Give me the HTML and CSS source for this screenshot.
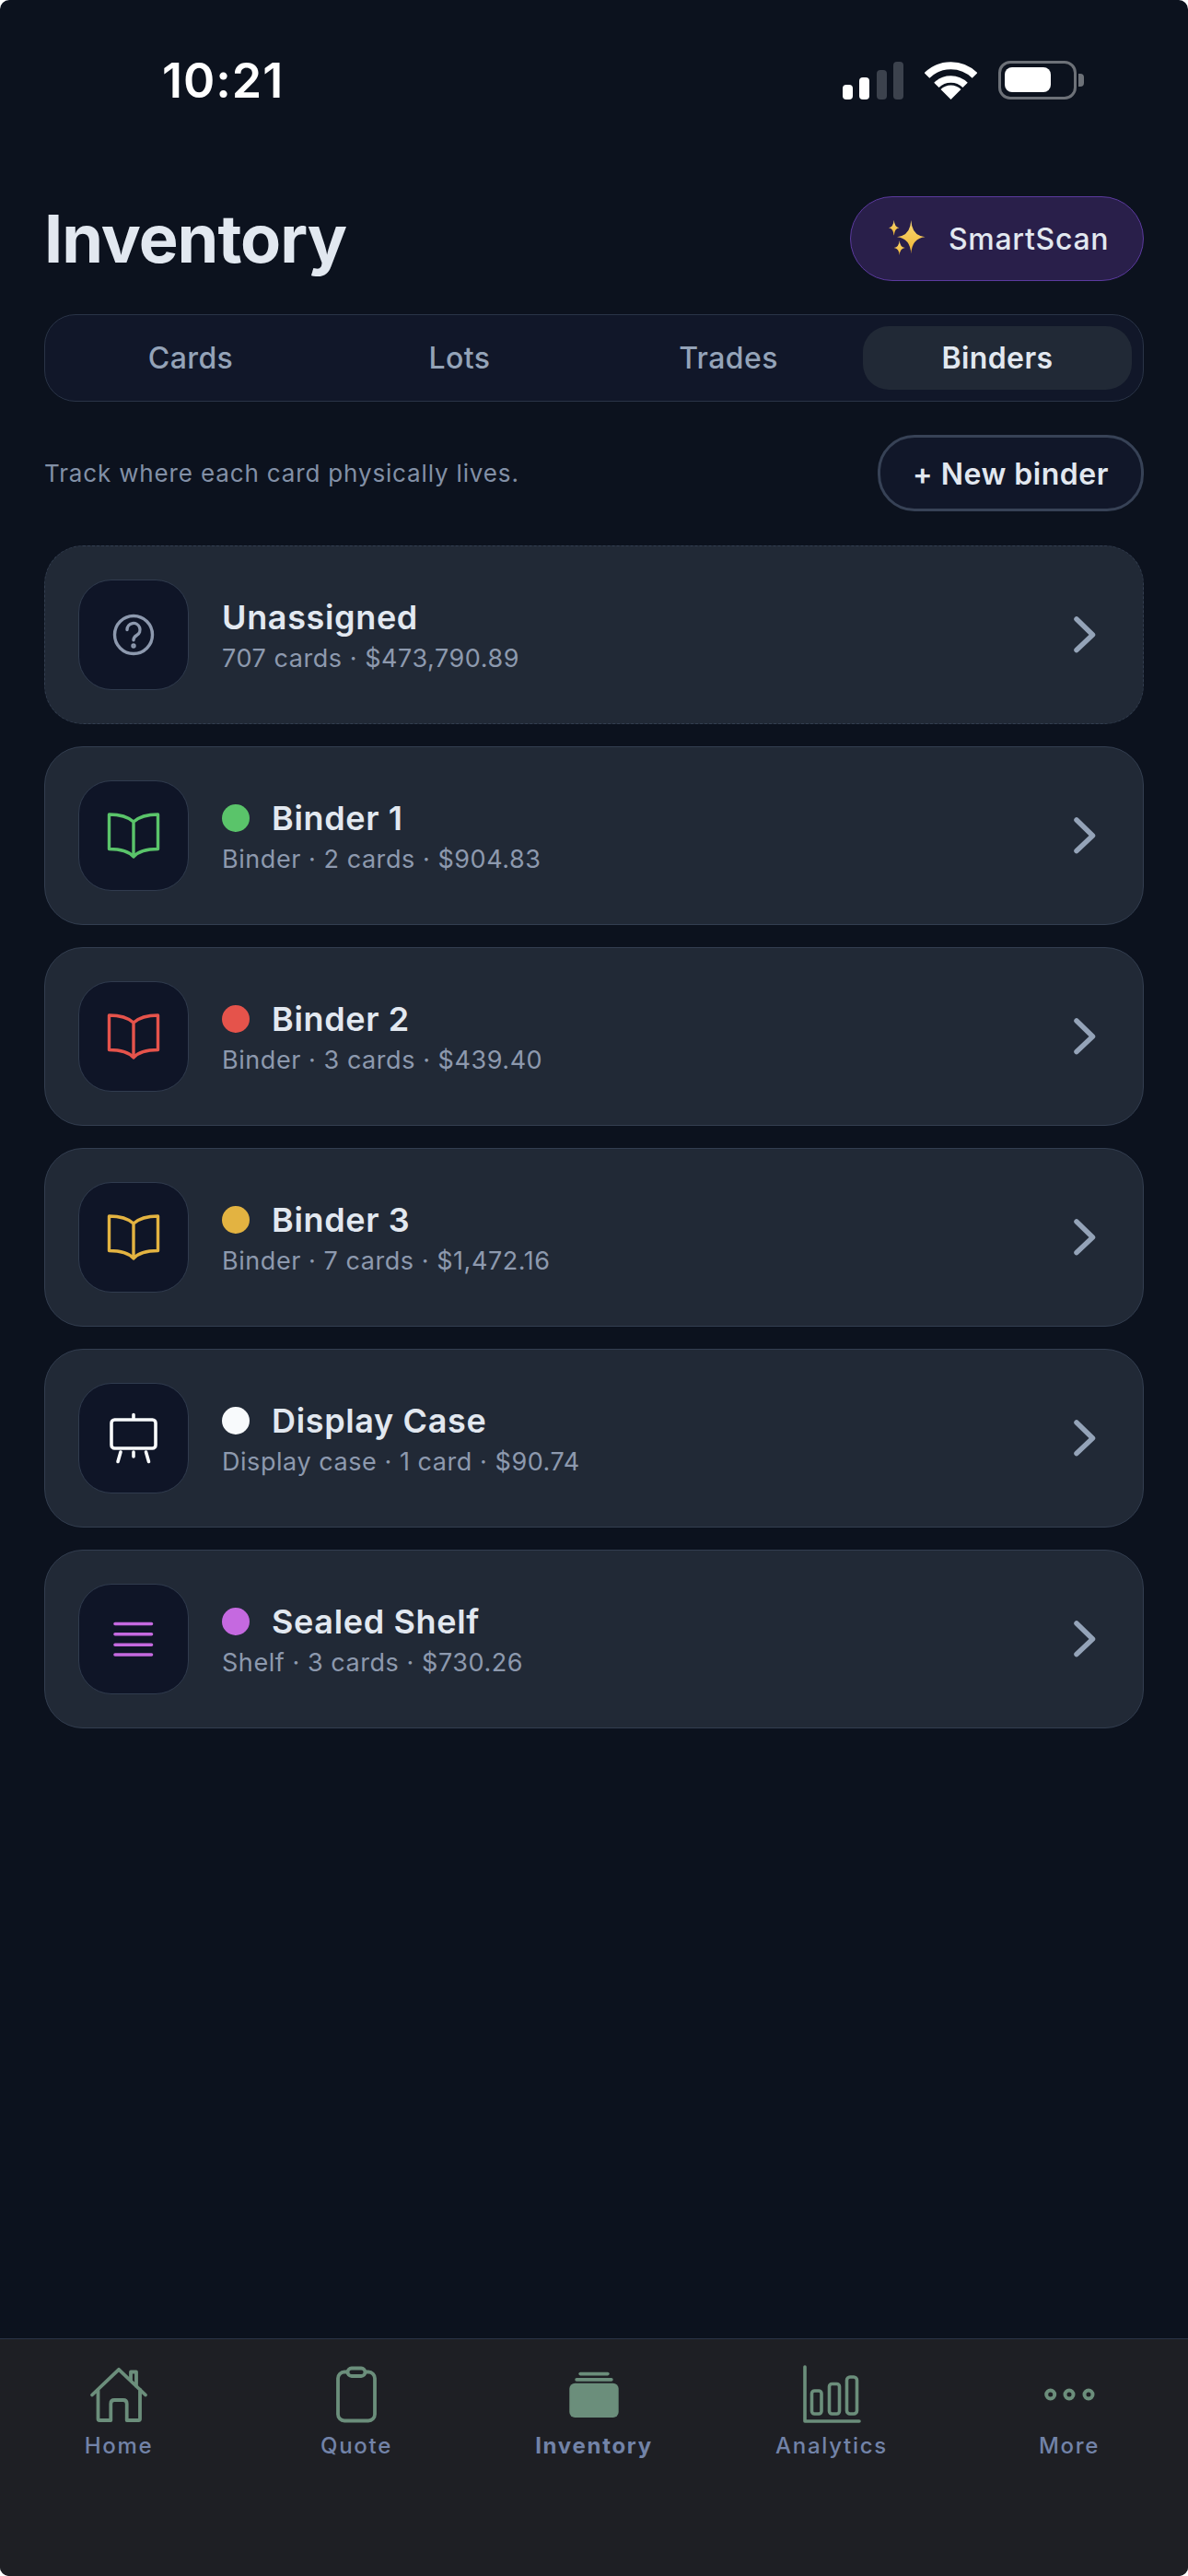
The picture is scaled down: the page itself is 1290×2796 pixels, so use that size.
FILE: index.html
```html
<!DOCTYPE html>
<html lang="en">
<head>
<meta charset="utf-8">
<title>Inventory</title>
<link rel="stylesheet" href="styles.css">
</head>
<body>
<div class="app">
  <div class="status">
    <div class="time">10:21</div>
    <div class="status-icons">
      <div class="signal"><i class="b1"></i><i class="b2"></i><i class="b3 dim"></i><i class="b4 dim"></i></div>
      <svg class="wifi" viewBox="0 0 57 41" width="57" height="41"><path d="M2.5 15A36.8 36.8 0 0 1 54.5 15" fill="none" stroke="#fff" stroke-width="8"/><path d="M12.9 25.4A22 22 0 0 1 44.1 25.4" fill="none" stroke="#fff" stroke-width="7.5"/><path d="M28.5 41L17.5 30A15.5 15.5 0 0 1 39.5 30Z" fill="#fff"/></svg>
      <div class="battery"><div class="battery-shell"><div class="battery-fill"></div></div><div class="battery-nub"></div></div>
    </div>
  </div>
  <main class="main">
    <header class="head">
      <h1 class="title">Inventory</h1>
      <button class="smart">
        <svg viewBox="0 0 40 40" width="40" height="40"><defs><linearGradient id="gold" x1="0" y1="0" x2="0" y2="1"><stop offset="0" stop-color="#f7d774"/><stop offset="1" stop-color="#f2b632"/></linearGradient></defs><path d="M24.3 0Q25.2 16.8 39.5 18.3Q25.2 19.8 24.3 36.5Q23.4 19.8 9 18.3Q23.4 16.8 24.3 0Z" fill="url(#gold)"/><path d="M5.7 -0.4Q6.2 7.6 11.4 8.3Q6.2 9 5.7 17Q5.2 9 0 8.3Q5.2 7.6 5.7 -0.4Z" fill="url(#gold)"/><path d="M11.7 22Q12.2 29.3 17.7 30Q12.2 30.7 11.7 38Q11.2 30.7 5.7 30Q11.2 29.3 11.7 22Z" fill="url(#gold)"/></svg>
        <span>SmartScan</span>
      </button>
    </header>
    <nav class="tabs">
      <div class="tab">Cards</div>
      <div class="tab">Lots</div>
      <div class="tab">Trades</div>
      <div class="tab active">Binders</div>
    </nav>
    <div class="bar">
      <p class="hint">Track where each card physically lives.</p>
      <button class="new">+ New binder</button>
    </div>
    <section class="list">
      <article class="card dashed">
        <div class="box c-slate"><svg viewBox="0 0 60 60" width="60" height="60" fill="none" stroke="currentColor" stroke-width="3.4" stroke-linecap="round"><circle cx="30" cy="30" r="20.5"/><path d="M23 24.5a7 7 0 1 1 10.5 6c-2.300 1.300-3.500 2.800-3.500 5.200"/><circle cx="30" cy="42" r="1" fill="currentColor"/></svg></div>
        <div class="info"><div class="name">Unassigned</div><div class="sub">707 cards · $473,790.89</div></div>
        <svg class="chev" viewBox="0 0 30 44" width="30" height="44"><path d="M6 5L23.500 22L6 38.500" fill="none" stroke="currentColor" stroke-width="5.500" stroke-linecap="round" stroke-linejoin="round"/></svg>
      </article>
      <article class="card">
        <div class="box c-green"><svg viewBox="0 0 60 60" width="60" height="60" fill="none" stroke="currentColor" stroke-width="3.4" stroke-linecap="round" stroke-linejoin="round"><path d="M30 15C24 9.500 13 7 3.500 7V44.500C13 44.500 24 46 30 53C36 46 47 44.500 56.500 44.500V7C47 7 36 9.500 30 15ZV51"/></svg></div>
        <div class="info"><div class="name"><i class="dot d-green"></i>Binder 1</div><div class="sub">Binder · 2 cards · $904.83</div></div>
        <svg class="chev" viewBox="0 0 30 44" width="30" height="44"><path d="M6 5L23.500 22L6 38.500" fill="none" stroke="currentColor" stroke-width="5.500" stroke-linecap="round" stroke-linejoin="round"/></svg>
      </article>
      <article class="card">
        <div class="box c-red"><svg viewBox="0 0 60 60" width="60" height="60" fill="none" stroke="currentColor" stroke-width="3.4" stroke-linecap="round" stroke-linejoin="round"><path d="M30 15C24 9.500 13 7 3.500 7V44.500C13 44.500 24 46 30 53C36 46 47 44.500 56.500 44.500V7C47 7 36 9.500 30 15ZV51"/></svg></div>
        <div class="info"><div class="name"><i class="dot d-red"></i>Binder 2</div><div class="sub">Binder · 3 cards · $439.40</div></div>
        <svg class="chev" viewBox="0 0 30 44" width="30" height="44"><path d="M6 5L23.500 22L6 38.500" fill="none" stroke="currentColor" stroke-width="5.500" stroke-linecap="round" stroke-linejoin="round"/></svg>
      </article>
      <article class="card">
        <div class="box c-yellow"><svg viewBox="0 0 60 60" width="60" height="60" fill="none" stroke="currentColor" stroke-width="3.4" stroke-linecap="round" stroke-linejoin="round"><path d="M30 15C24 9.500 13 7 3.500 7V44.500C13 44.500 24 46 30 53C36 46 47 44.500 56.500 44.500V7C47 7 36 9.500 30 15ZV51"/></svg></div>
        <div class="info"><div class="name"><i class="dot d-yellow"></i>Binder 3</div><div class="sub">Binder · 7 cards · $1,472.16</div></div>
        <svg class="chev" viewBox="0 0 30 44" width="30" height="44"><path d="M6 5L23.500 22L6 38.500" fill="none" stroke="currentColor" stroke-width="5.500" stroke-linecap="round" stroke-linejoin="round"/></svg>
      </article>
      <article class="card">
        <div class="box c-white"><svg viewBox="0 0 60 60" width="60" height="60" fill="none" stroke="currentColor" stroke-width="3.6" stroke-linecap="round" stroke-linejoin="round"><rect x="6" y="10" width="48" height="31" rx="3.500"/><path d="M30 4.500V9M16 45L13 55.500M30 45V50M43.500 45L46.500 55.500"/></svg></div>
        <div class="info"><div class="name"><i class="dot d-white"></i>Display Case</div><div class="sub">Display case · 1 card · $90.74</div></div>
        <svg class="chev" viewBox="0 0 30 44" width="30" height="44"><path d="M6 5L23.500 22L6 38.500" fill="none" stroke="currentColor" stroke-width="5.500" stroke-linecap="round" stroke-linejoin="round"/></svg>
      </article>
      <article class="card">
        <div class="box c-purple"><svg viewBox="0 0 60 60" width="60" height="60" fill="none" stroke="currentColor" stroke-width="3.600" stroke-linecap="round"><path d="M10 13.500H49.500M10 24.800H49.500M10 36.200H49.500M10 47H49.500"/></svg></div>
        <div class="info"><div class="name"><i class="dot d-purple"></i>Sealed Shelf</div><div class="sub">Shelf · 3 cards · $730.26</div></div>
        <svg class="chev" viewBox="0 0 30 44" width="30" height="44"><path d="M6 5L23.500 22L6 38.500" fill="none" stroke="currentColor" stroke-width="5.500" stroke-linecap="round" stroke-linejoin="round"/></svg>
      </article>
    </section>
  </main>
  <footer class="nav">
    <div class="nav-item">
      <svg viewBox="0 0 72 72" width="72" height="72" fill="none" stroke="currentColor" stroke-width="3.800" stroke-linecap="round" stroke-linejoin="round"><path d="M7 36.500L36 8.800L65 36.500M13.500 30.500V62.500Q13.500 64 15 64H27.300V46Q27.300 42 31.300 42H40.700Q44.700 42 44.700 46V64H57.500Q59 64 59 62.500V30.500M49 21V11.500H55V27"/></svg>
      <span>Home</span>
    </div>
    <div class="nav-item">
      <svg viewBox="0 0 72 72" width="72" height="72" fill="none" stroke="currentColor" stroke-width="3.800"><rect x="16" y="11.500" width="40" height="53" rx="7"/><rect x="26.500" y="7.500" width="19" height="8.500" rx="4.200" class="nav-fill"/></svg>
      <span>Quote</span>
    </div>
    <div class="nav-item">
      <svg viewBox="0 0 72 72" width="72" height="72" fill="currentColor"><rect x="9.300" y="23.700" width="53.400" height="37.300" rx="6"/><rect x="15.300" y="18" width="41.400" height="3.700" rx="1.800"/><rect x="19.300" y="11.700" width="33.400" height="3.700" rx="1.800"/></svg>
      <span class="strong">Inventory</span>
    </div>
    <div class="nav-item">
      <svg viewBox="0 0 72 72" width="72" height="72" fill="none" stroke="currentColor" stroke-width="3.600" stroke-linecap="round" stroke-linejoin="round"><path d="M7 6V65H66"/><rect x="14.500" y="32" width="10.500" height="25" rx="3"/><rect x="33.500" y="24.500" width="11" height="32.500" rx="3"/><rect x="52.500" y="17" width="11" height="40" rx="3.500"/></svg>
      <span>Analytics</span>
    </div>
    <div class="nav-item">
      <svg viewBox="0 0 72 72" width="72" height="72" fill="none" stroke="currentColor" stroke-width="4"><circle cx="15.700" cy="36" r="4.500"/><circle cx="36" cy="36" r="4.500"/><circle cx="57" cy="36" r="4.500"/></svg>
      <span>More</span>
    </div>
  </footer>
</div>
</body>
</html>
```
FILE: styles.css
```css
* { box-sizing: border-box; }
html, body { margin: 0; padding: 0; background: #fff; }
body { font-family: Inter, "Noto Sans", sans-serif; }
.app {
  width: 1290px;
  height: 2796px;
  background: #0c121e;
  border-radius: 10px;
  overflow: hidden;
  display: flex;
  flex-direction: column;
}
.status {
  height: 213px;
  display: flex;
  justify-content: space-between;
  align-items: flex-start;
  padding: 57px 113px 0 176px;
}
.time { color: #fff; font-size: 52px; line-height: 62px; font-weight: 600; letter-spacing: 1px; }
.status-icons { display: flex; align-items: flex-end; padding-top: 9px; }
.signal { display: flex; align-items: flex-end; gap: 7.500px; margin-right: 23px; }
.signal i { display: block; width: 11px; background: #fff; border-radius: 4px; }
.signal .dim { background: #3c424d; }
.b1 { height: 16px; }
.b2 { height: 24px; }
.b3 { height: 32px; }
.b4 { height: 41px; }
.wifi { display: block; margin-right: 23px; }
.battery { display: flex; align-items: center; }
.battery-shell { width: 85px; height: 42px; border: 3.500px solid #6d7178; border-radius: 13px; padding: 3.500px; }
.battery-fill { width: 50px; height: 27px; background: #fff; border-radius: 8px; }
.battery-nub { width: 6px; height: 14px; margin-left: 2px; background: #6d7178; border-radius: 0 4px 4px 0; }
.main { flex: 1; padding: 0 48px; }
.head { display: flex; justify-content: space-between; align-items: center; height: 92px; }
.title { margin: 0; font-size: 72px; line-height: 92px; font-weight: 700; color: #e2e8f0; letter-spacing: -1px; padding-left: 0; }
button { font-family: inherit; }
.smart {
  width: 319px;
  height: 92px;
  padding: 0 0 0 41px;
  display: flex;
  align-items: center;
  gap: 25px;
  border: 1.500px solid #5b3a9e;
  border-radius: 46px;
  background: #291f4a;
  color: #e2e8f0;
  font-size: 32px;
  font-weight: 500;
  letter-spacing: 0.7px;
}
.tabs {
  margin-top: 36px;
  height: 95px;
  display: flex;
  padding: 12px;
  border: 1px solid #2a3447;
  border-radius: 34px;
  background: #111729;
}
.tab {
  flex: 1;
  display: flex;
  align-items: center;
  justify-content: center;
  border-radius: 28px;
  font-size: 32px;
  font-weight: 500;
  color: #94a3b8;
  letter-spacing: 0.4px;
}
.tab.active { background: #212936; color: #e2e8f0; font-weight: 600; }
.bar { margin-top: 36px; height: 83px; display: flex; justify-content: space-between; align-items: center; }
.hint { margin: 0; font-size: 26px; color: #8290a6; letter-spacing: 0.85px; }
.new {
  width: 289px;
  height: 83px;
  padding: 2px 0 0;
  border: 3px solid #374256;
  border-radius: 40px;
  background: #111729;
  color: #e2e8f0;
  font-size: 32px;
  font-weight: 600;
  letter-spacing: 0.5px;
}
.list { margin-top: 37px; display: flex; flex-direction: column; gap: 24px; }
.card {
  height: 194px;
  display: flex;
  align-items: center;
  padding: 0 36px;
  border: 1px solid #333e50;
  border-radius: 42px;
  background: #212936;
}
.card.dashed { border-style: dashed; }
.box {
  width: 120px;
  height: 120px;
  flex: none;
  display: flex;
  align-items: center;
  justify-content: center;
  border: 1px solid #303b4e;
  border-radius: 36px;
  background: #0f1527;
}
.box svg { display: block; }
.c-slate { color: #8d99ae; }
.c-green { color: #5ac46a; }
.c-red { color: #e5534b; }
.c-yellow { color: #e3b341; }
.c-white { color: #f8fafc; }
.c-purple { color: #c569e0; }
.info { flex: 1; margin-left: 36px; padding-top: 2px; }
.name { display: flex; align-items: center; font-size: 36px; line-height: 46px; font-weight: 600; color: #e2e8f0; letter-spacing: 0.65px; }
.dot { width: 30px; height: 30px; margin-right: 24px; border-radius: 50%; flex: none; }
.d-green { background: #5ac46a; }
.d-red { background: #e5534b; }
.d-yellow { background: #e3b341; }
.d-white { background: #f8fafc; }
.d-purple { background: #c569e0; }
.sub { margin-top: 4px; font-size: 27px; line-height: 36px; color: #8d99ae; letter-spacing: 0.55px; }
.chev { margin-right: 12px; color: #94a3b8; flex: none; }
.nav {
  height: 258px;
  flex: none;
  display: flex;
  padding-top: 24px;
  border-top: 1px solid #2a3447;
  background: #1e1f24;
}
.nav-item { flex: 1; display: flex; flex-direction: column; align-items: center; color: #6b8e7b; }
.nav-item svg { display: block; }
.nav-fill { fill: #1e1f24; }
.nav-item span { font-size: 24px; line-height: 36px; margin-top: 2px; color: #7283a8; letter-spacing: 1.700px; font-weight: 500; }
.nav-item .strong { font-weight: 700; }
```
